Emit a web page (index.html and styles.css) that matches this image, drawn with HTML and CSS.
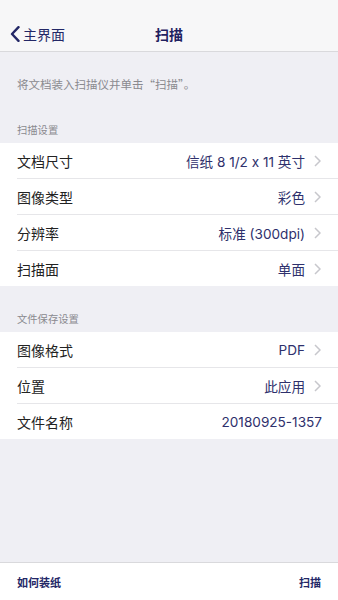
FILE: index.html
```html
<!DOCTYPE html>
<html lang="zh">
<head>
<meta charset="utf-8">
<link rel="stylesheet" href="styles.css">
</head>
<body>
<div class="screen">
  <header class="nav">
    <div class="back">
      <svg class="back-icon" width="10" height="16" viewBox="0 0 10 16"><path d="M8.5 1.2 L2 8 L8.5 14.8" fill="none" stroke="#232766" stroke-width="2.4" stroke-linecap="round" stroke-linejoin="round"/></svg>
      <span>主界面</span>
    </div>
    <div class="title">扫描</div>
  </header>
  <main class="content">
    <p class="info">将文档装入扫描仪并单击“扫描”。</p>
    <div class="section-title">扫描设置</div>
    <ul class="group">
      <li class="row"><span class="label">文档尺寸</span><span class="value">信纸 8 1/2 x 11 英寸</span><svg class="chev" width="7" height="12" viewBox="0 0 7 12"><path d="M1 1 L6 6 L1 11" fill="none" stroke="#c7c7cc" stroke-width="1.5"/></svg></li>
      <li class="row"><span class="label">图像类型</span><span class="value">彩色</span><svg class="chev" width="7" height="12" viewBox="0 0 7 12"><path d="M1 1 L6 6 L1 11" fill="none" stroke="#c7c7cc" stroke-width="1.5"/></svg></li>
      <li class="row"><span class="label">分辨率</span><span class="value">标准 (300dpi)</span><svg class="chev" width="7" height="12" viewBox="0 0 7 12"><path d="M1 1 L6 6 L1 11" fill="none" stroke="#c7c7cc" stroke-width="1.5"/></svg></li>
      <li class="row"><span class="label">扫描面</span><span class="value">单面</span><svg class="chev" width="7" height="12" viewBox="0 0 7 12"><path d="M1 1 L6 6 L1 11" fill="none" stroke="#c7c7cc" stroke-width="1.5"/></svg></li>
    </ul>
    <div class="section-title second">文件保存设置</div>
    <ul class="group">
      <li class="row"><span class="label">图像格式</span><span class="value">PDF</span><svg class="chev" width="7" height="12" viewBox="0 0 7 12"><path d="M1 1 L6 6 L1 11" fill="none" stroke="#c7c7cc" stroke-width="1.5"/></svg></li>
      <li class="row"><span class="label">位置</span><span class="value">此应用</span><svg class="chev" width="7" height="12" viewBox="0 0 7 12"><path d="M1 1 L6 6 L1 11" fill="none" stroke="#c7c7cc" stroke-width="1.5"/></svg></li>
      <li class="row"><span class="label">文件名称</span><span class="value plain">20180925-1357</span></li>
    </ul>
  </main>
  <footer class="toolbar">
    <span class="tool">如何装纸</span>
    <span class="tool">扫描</span>
  </footer>
</div>
</body>
</html>
```
FILE: styles.css
```css
* { box-sizing: border-box; }
html, body { margin: 0; padding: 0; }
body {
  background: #efeff4;
  font-family: "Noto Sans CJK SC", "Noto Sans", sans-serif;
  width: 338px;
  height: 600px;
  overflow: hidden;
}
.screen {
  display: flex;
  flex-direction: column;
  height: 600px;
}
.nav {
  height: 52px;
  padding-top: 17px;
  background: #f7f7f8;
  border-bottom: 1px solid #d9d9dc;
  display: flex;
  align-items: center;
  position: relative;
  flex: none;
}
.back {
  display: flex;
  align-items: center;
  gap: 3px;
  padding-left: 10px;
  color: #232766;
  font-size: 14px;
  height: 34px;
}
.back span { line-height: 1; }
.title {
  position: absolute;
  left: 0;
  right: 0;
  top: 17px;
  height: 34px;
  line-height: 34px;
  text-align: center;
  font-size: 14px;
  font-weight: 700;
  color: #1f2160;
  pointer-events: none;
}
.content { flex: 1; }
.info {
  margin: 0;
  padding: 24px 17px 0;
  font-size: 11.5px;
  line-height: 16px;
  color: #8a8a8f;
}
.section-title {
  padding: 31px 17px 0;
  height: 51px;
  font-size: 10.3px;
  line-height: 14px;
  color: #8a8a8f;
}
.section-title.second {
  padding-top: 26px;
  height: 46px;
}
.group {
  list-style: none;
  margin: 0;
  padding: 0 0 0 17px;
  background: #fff;
}
.row {
  height: 36px;
  display: flex;
  align-items: center;
  padding-right: 17px;
  border-bottom: 1px solid #e6e6e9;
}
.row:last-child { border-bottom: none; height: 35px; }
.label {
  font-size: 14px;
  color: #222;
  flex: 1;
}
.value {
  font-family: "Inter", "Noto Sans CJK SC", sans-serif;
  font-size: 13.6px;
  color: #2e306c;
}
.chev { margin-left: 9px; flex: none; }
.value.plain { margin-right: -1px; }
.toolbar {
  flex: none;
  height: 38px;
  border-top: 1px solid #d9d9dc;
  background: #fff;
  display: flex;
  justify-content: space-between;
  align-items: center;
  padding: 0 17px 0 17px;
}
.tool {
  font-size: 11px;
  font-weight: 700;
  color: #232766;
}
```
